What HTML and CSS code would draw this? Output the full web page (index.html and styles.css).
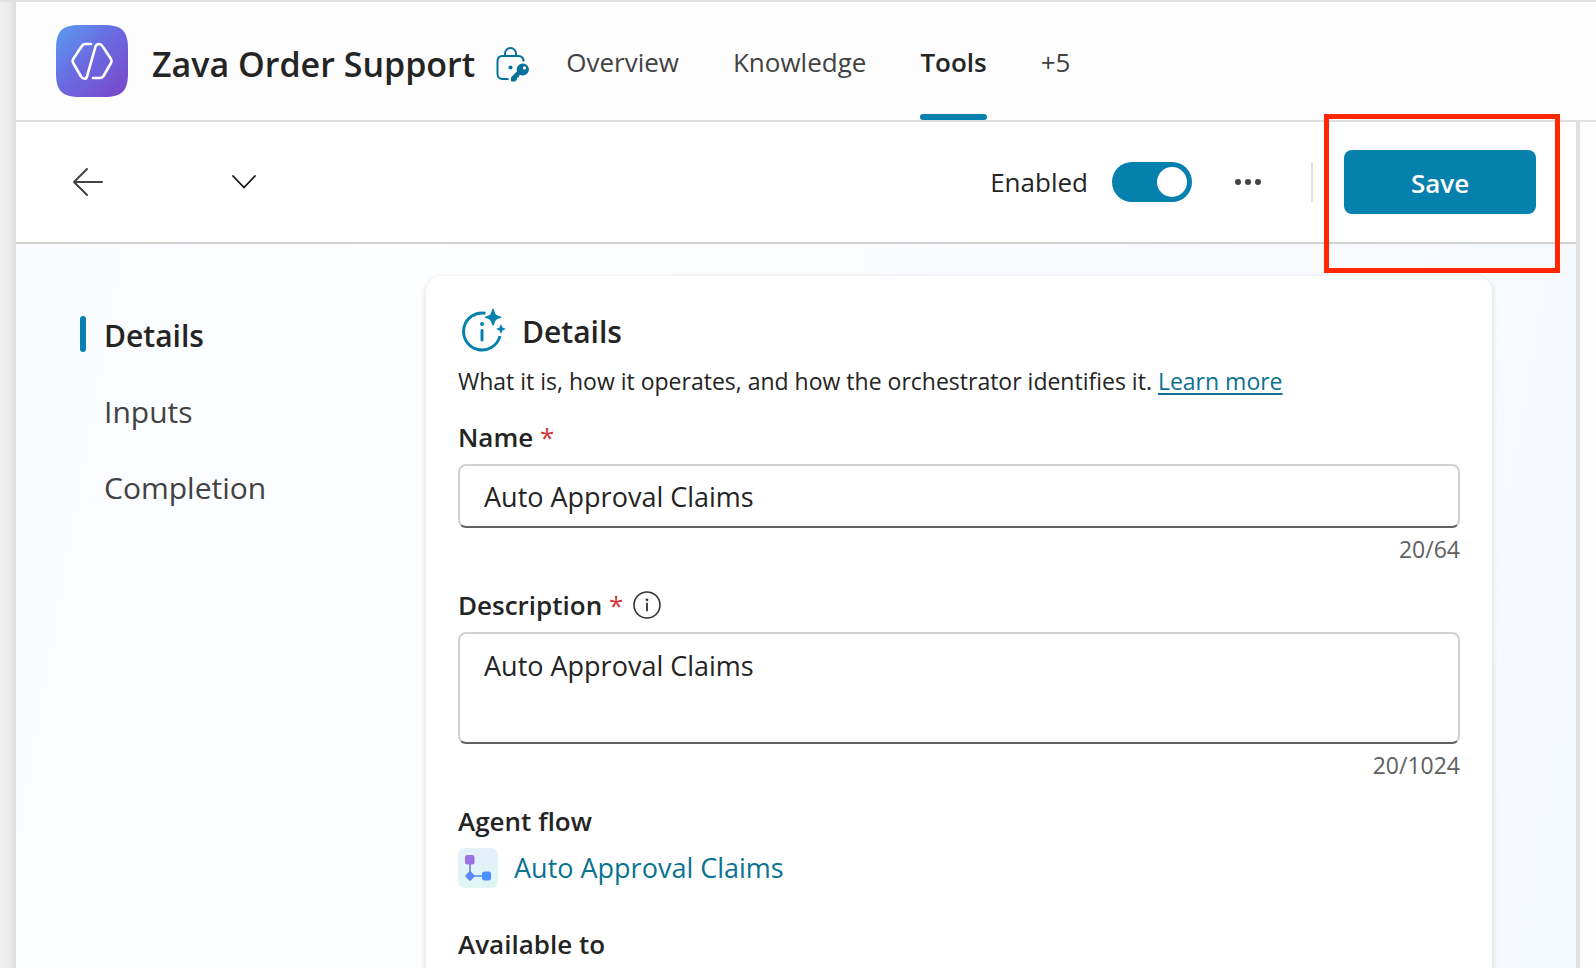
FILE: index.html
```html
<!DOCTYPE html>
<html lang="en">
<head>
<meta charset="utf-8">
<title>Zava Order Support - Tools</title>
<link rel="stylesheet" href="styles.css">
</head>
<body>
<div class="app">
  <header class="topbar">
    <svg class="logo" viewBox="0 0 72 72" aria-hidden="true">
      <defs>
        <linearGradient id="logo-fill" x1="0" y1="0" x2="1" y2="1">
          <stop offset="0" stop-color="#5a9cf0"/>
          <stop offset=".45" stop-color="#6a6be2"/>
          <stop offset="1" stop-color="#7a45c8"/>
        </linearGradient>
      </defs>
      <path fill="url(#logo-fill)" d="M24 0H48C66 0 72 6 72 24V48C72 66 66 72 48 72H24C6 72 0 66 0 48V24C0 6 6 0 24 0Z"/>
      <path fill="none" stroke="#fff" stroke-width="2.6" stroke-linecap="round" stroke-linejoin="round" d="M35 19H29.500Q27 19 25.500 21.500L17.200 34Q16 36 17.200 38L25 51.500Q26.500 53.800 28.500 53.800Q30.300 53.800 31 51.500L39.500 21.500Q40.500 19 43 19Q45 19 46.500 21.200L55 34Q56.300 36 55 38L47.500 51Q46 53 44 53H37"/>
    </svg>
    <div class="brand">
      <h1 class="title">Zava Order Support</h1>
      <svg class="lock" viewBox="0 0 34 36" aria-hidden="true">
        <g fill="none" stroke="#06719c" stroke-width="2" stroke-linecap="butt">
          <path d="M9 10V7.500A5.500 5.500 0 0 1 20 7.500V10"/>
          <path d="M27.500 15.500C27.500 12 25.500 10 22.500 10H6.500C3.500 10 1.500 12 1.500 15V27.500C1.500 31 3.500 33 6.500 33H12.500"/>
        </g>
        <circle cx="14.500" cy="21.500" r="2" fill="#06719c"/>
        <path fill="#06719c" fill-rule="evenodd" d="M26.500 17.500A6 6 0 1 1 24.500 29L23 29.500V31.500H21V33.500L19 35.500H15.500Q15 35.500 15 35V31.500L21 25.300A6 6 0 0 1 26.500 17.500ZM28.500 20.300A1.600 1.600 0 1 0 28.500 23.500A1.600 1.600 0 1 0 28.500 20.300Z"/>
      </svg>
    </div>
    <nav class="tabs" aria-label="Agent sections">
      <a class="tab" href="#overview">Overview</a>
      <a class="tab" href="#knowledge">Knowledge</a>
      <a class="tab tab-active" href="#tools" aria-current="page">Tools</a>
      <button class="tab tab-more" type="button">+5</button>
    </nav>
  </header>

  <div class="workspace">
    <div class="main">
      <div class="toolbar">
        <button class="icon-button" type="button" aria-label="Back">
          <svg class="arrow" viewBox="0 0 32 32"><path d="M30 16H2M15 3L2 16L15 29" fill="none" stroke="#424242" stroke-width="2" stroke-linecap="round" stroke-linejoin="round"/></svg>
        </button>
        <button class="icon-button" type="button" aria-label="Switch tool">
          <svg class="chevron" viewBox="0 0 24 24"><path d="M1 6L12 17.500L23 6" fill="none" stroke="#111" stroke-width="1.800" stroke-linecap="round" stroke-linejoin="round"/></svg>
        </button>
        <div class="actions">
          <label class="toggle-label" for="enabled">Enabled</label>
          <input class="toggle" type="checkbox" role="switch" id="enabled" checked>
          <button class="icon-button more" type="button" aria-label="More options">
            <svg class="dots" viewBox="0 0 32 32" fill="#424242"><circle cx="6" cy="16" r="3"/><circle cx="16" cy="16" r="3"/><circle cx="26" cy="16" r="3"/></svg>
          </button>
          <span class="divider"></span>
          <div class="save-wrap">
            <button class="save" type="button">Save</button>
            <span class="highlight"></span>
          </div>
        </div>
      </div>

      <div class="content">
        <nav class="side" aria-label="Tool sections">
          <a class="side-link side-active" href="#details">Details</a>
          <a class="side-link" href="#inputs">Inputs</a>
          <a class="side-link" href="#completion">Completion</a>
        </nav>

        <section class="card" id="details">
          <div class="card-head">
            <svg class="details-icon" viewBox="0 0 48 48" aria-hidden="true">
              <path d="M27.500 5.300A18.500 18.500 0 1 0 42 28" fill="none" stroke="#0680ad" stroke-width="3"/>
              <circle cx="24" cy="16" r="2" fill="#0680ad"/>
              <path d="M24 22.500V32" stroke="#0680ad" stroke-width="3" stroke-linecap="round"/>
              <path fill="#0680ad" d="M35 .5Q35.500 .5 35.800 1.500L37.100 5.300Q37.700 7 39.500 7.600L43 8.700Q44 9.200 43 9.800L39.500 11Q37.700 11.700 37.100 13.500L35.800 17Q35 18.500 34.200 17L33 13.500Q32.300 11.700 30.500 11L27 9.800Q26 9.200 27 8.700L30.500 7.600Q32.300 7 33 5.300L34.200 1.500Q34.500 .5 35 .5Z"/>
              <path fill="#0680ad" d="M43 16L44.500 19.500Q44.800 19.800 48 21Q44.800 22.200 44.500 22.500L43 26L41.500 22.500Q41.200 22.200 38 21Q41.200 19.800 41.500 19.500Z"/>
            </svg>
            <h2 class="card-title">Details</h2>
          </div>
          <p class="summary">What it is, how it operates, and how the orchestrator identifies it. <a class="link underlined" href="#learn">Learn more</a></p>

          <div class="field">
            <label class="label" for="name">Name <span class="required">*</span></label>
            <input class="control" type="text" id="name" value="Auto Approval Claims" maxlength="64">
            <span class="count">20/64</span>
          </div>

          <div class="field">
            <div class="label-row">
              <label class="label" for="description">Description <span class="required">*</span></label>
              <svg class="info" viewBox="0 0 28 28" aria-hidden="true"><circle cx="14" cy="14" r="13" fill="none" stroke="#333" stroke-width="1.600"/><circle cx="14" cy="8.800" r="1.400" fill="#333"/><path d="M14 12.500V19.500" stroke="#333" stroke-width="1.800" stroke-linecap="round"/></svg>
            </div>
            <textarea class="control area" id="description" maxlength="1024">Auto Approval Claims</textarea>
            <span class="count">20/1024</span>
          </div>

          <div class="field flow">
            <h3 class="label">Agent flow</h3>
            <a class="link flow-link" href="#flow">
              <svg class="flow-icon" viewBox="0 0 40 40" aria-hidden="true">
                <defs>
                  <linearGradient id="flow-bg" x1="0" y1="0" x2="0" y2="1"><stop offset="0" stop-color="#e3effc"/><stop offset="1" stop-color="#dff6f3"/></linearGradient>
                  <linearGradient id="flow-line" x1="0" y1="0" x2="0" y2="1"><stop offset="0" stop-color="#9470e4"/><stop offset="1" stop-color="#5c88f8"/></linearGradient>
                </defs>
                <rect width="40" height="40" rx="7" fill="url(#flow-bg)"/>
                <rect x="11.200" y="15" width="1.600" height="10" fill="url(#flow-line)"/>
                <rect x="15" y="27.200" width="10" height="1.600" fill="#5a90fa"/>
                <rect x="7" y="7" width="9.500" height="9.500" rx="2.500" fill="#9a72e4"/>
                <rect x="8.300" y="24.300" width="7.400" height="7.400" rx="1.500" transform="rotate(45 12 28)" fill="#5c88f8"/>
                <rect x="24" y="23.500" width="9" height="9" rx="2.500" fill="#4a90ff"/>
              </svg>
              <span>Auto Approval Claims</span>
            </a>
          </div>

          <h3 class="label">Available to</h3>
        </section>
      </div>
    </div>
    <aside class="panel"></aside>
  </div>
</div>
</body>
</html>
```
FILE: styles.css
```css
* { box-sizing: border-box; }

html, body { height: 100%; }

body {
  margin: 0;
  overflow: hidden;
  padding-left: 16px;
  border-top: 2px solid #e0e0e0;
  background: linear-gradient(90deg, #efefef 0, #ebebeb 9px, #dcdcdc 16px);
  color: #242424;
  font-family: "Open Sans", "Noto Sans", sans-serif;
  font-size: 26px;
  line-height: 40px;
}

h1, h2, h3, p { margin: 0; }
a { color: inherit; text-decoration: none; }
button, input, textarea { font: inherit; color: inherit; }
svg { display: block; flex: none; }

.app {
  display: flex;
  flex-direction: column;
  min-height: 100%;
  background: #fdfdfe;
}

.topbar {
  display: flex;
  align-items: center;
  height: 120px;
  padding-left: 40px;
  border-bottom: 2px solid #e0e0e0;
}

.logo { width: 72px; height: 72px; }
.brand { display: flex; align-items: center; gap: 21px; margin-left: 24px; padding-top: 5px; }
.title { font-size: 34px; font-weight: 600; white-space: nowrap; }
.lock { width: 34px; height: 36px; }

.tabs { display: flex; align-self: stretch; gap: 54px; margin-left: 36px; }

.tab {
  position: relative;
  display: flex;
  align-items: center;
  padding: 2px 0 0;
  border: 0;
  background: none;
  color: #424242;
}
.tab-active { color: #242424; font-weight: 600; }
.tab-active::after {
  content: "";
  position: absolute;
  right: 0;
  bottom: 0;
  left: 0;
  height: 6px;
  border-radius: 3px;
  background: #0680ad;
}
.tab-more { font-weight: 500; }

.workspace { display: flex; flex: 1; }
.main { display: flex; flex: 1; flex-direction: column; min-width: 0; }
.panel { width: 20px; border-left: 4px solid #e0e0e0; }

.toolbar {
  display: flex;
  align-items: center;
  height: 122px;
  padding: 0 40px 0 56px;
  border-bottom: 2px solid #d1d1d1;
  background: #fff;
}

.icon-button { padding: 0; border: 0; background: none; }
.arrow { width: 32px; height: 32px; }
.chevron { width: 24px; height: 24px; margin-left: 128px; }
.dots { width: 32px; height: 32px; }

.actions { display: flex; align-items: center; margin-left: auto; }

.toggle {
  position: relative;
  width: 80px;
  height: 40px;
  margin: 0 40px 0 24px;
  border-radius: 20px;
  appearance: none;
  background: #8a8a8a;
}
.toggle::after {
  content: "";
  position: absolute;
  top: 5px;
  left: 5px;
  width: 30px;
  height: 30px;
  border-radius: 50%;
  background: #fff;
}
.toggle:checked { background: #0680ad; }
.toggle:checked::after { right: 5px; left: auto; }

.divider { width: 2px; height: 40px; margin: 0 31px 0 47px; background: #e0e0e0; }

.save-wrap { position: relative; }
.save {
  display: block;
  width: 192px;
  height: 64px;
  padding: 2px 0 0;
  border: 0;
  border-radius: 8px;
  background: #0680ad;
  color: #fff;
  font-weight: 600;
}
.highlight {
  position: absolute;
  inset: -36px -24px -59px -20px;
  border: 5px solid #ff2600;
  pointer-events: none;
}

.content {
  display: flex;
  flex: 1;
  padding: 32px 84px 0 64px;
  background: linear-gradient(100deg, #fafbff 0, #fdfeff 22%, #f9fafe 75%, #f4f9fd 100%);
}

.side {
  display: flex;
  flex-direction: column;
  flex: none;
  gap: 36px;
  width: 346px;
  padding-top: 40px;
  font-size: 30px;
}
.side-link { display: flex; align-items: flex-start; gap: 18px; color: #424242; }
.side-link::before { content: ""; width: 6px; height: 36px; border-radius: 3px; }
.side-active { color: #242424; font-weight: 600; }
.side-active::before { background: #0680ad; }

.card {
  flex: 1;
  min-width: 0;
  padding: 32px;
  border-radius: 16px 16px 0 0;
  background: #fff;
  box-shadow: 0 2px 6px rgba(0, 0, 0, .14);
}

.card-head { display: flex; align-items: center; gap: 16px; }
.details-icon { width: 48px; height: 48px; }
.card-title { font-size: 30px; font-weight: 600; }
.summary { margin-top: 7px; font-size: 23px; line-height: 36px; }

.link { color: #0b7292; }
.underlined { text-decoration: underline; text-decoration-thickness: 2px; text-underline-offset: 3px; }

.field { display: flex; flex-direction: column; margin-top: 18px; }
.label { font-size: 26px; font-weight: 600; }
.required { color: #d13438; font-weight: 400; }
.label-row { display: flex; align-items: center; gap: 10px; }
.info { width: 28px; height: 28px; }

.control {
  width: 100%;
  height: 64px;
  margin-top: 7px;
  padding: 0 24px;
  border: 2px solid #d1d1d1;
  border-bottom-color: #616161;
  border-radius: 8px;
  outline: 0;
  background: #fff;
  font-size: 27px;
}
.area { height: 112px; padding-top: 12px; resize: none; }

.count { align-self: flex-end; margin-top: 3px; color: #616161; font-size: 23px; line-height: 36px; }

.flow { margin-bottom: 36px; }
.flow-link { display: flex; align-items: center; gap: 16px; margin-top: 7px; font-size: 27px; }
.flow-icon { width: 40px; height: 40px; }
```
